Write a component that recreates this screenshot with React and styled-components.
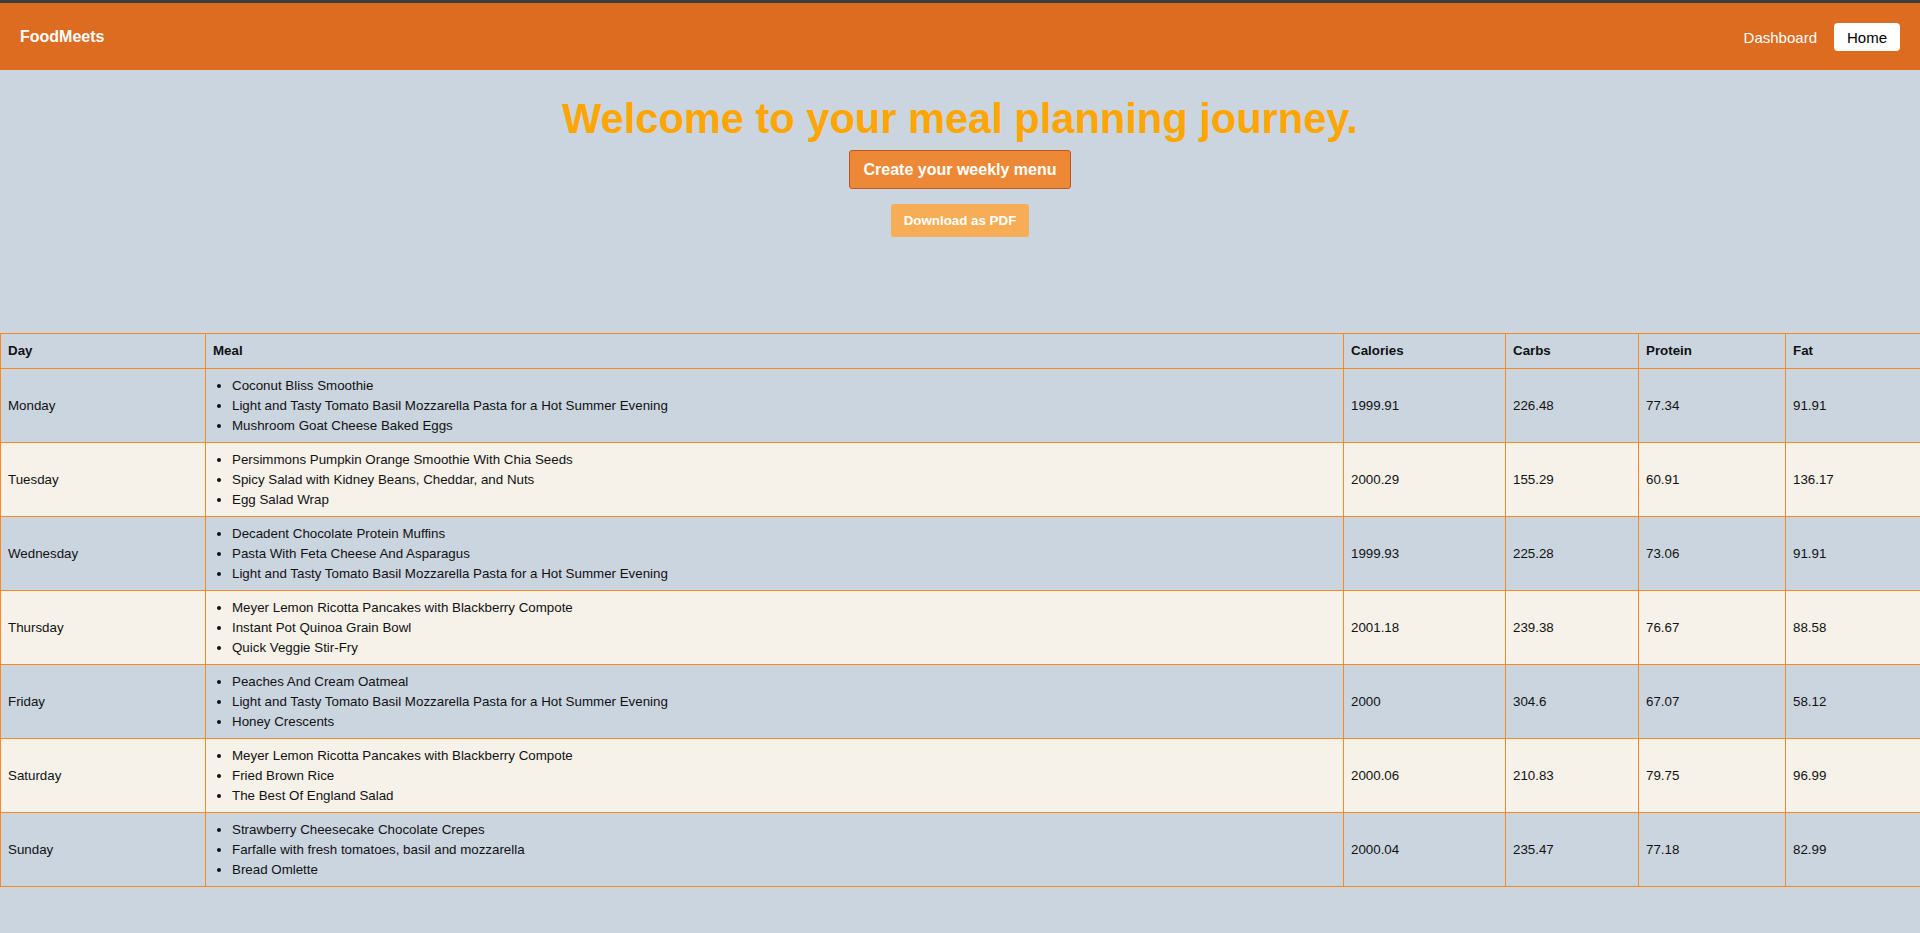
import React from "react";
import styled, { createGlobalStyle } from "styled-components";

const GlobalStyle = createGlobalStyle`
  html, body {
    margin: 0;
    padding: 0;
    background: #cbd5e0;
    font-family: "Liberation Sans", Arial, sans-serif;
  }
  * { box-sizing: border-box; }
`;

const Page = styled.div`
  min-height: 933px;
  background: #cbd5e0;
`;

const NavBar = styled.nav`
  display: flex;
  align-items: center;
  justify-content: space-between;
  height: 70px;
  padding: 1px 20px 0;
  background: #dd6b20;
  border-top: 3px solid #3d3d3d;
`;

const Brand = styled.div`
  color: #ffffff;
  font-weight: 700;
  font-size: 16px;
`;

const NavLinks = styled.div`
  display: flex;
  align-items: center;
  gap: 17px;
`;

const NavLink = styled.a`
  color: #ffffff;
  font-size: 15px;
  text-decoration: none;
  cursor: pointer;
`;

const NavButton = styled.button`
  height: 28px;
  padding: 0 13px;
  background: #ffffff;
  color: #000000;
  font-family: inherit;
  font-size: 15px;
  border: none;
  border-radius: 4px;
`;

const Hero = styled.section`
  display: flex;
  flex-direction: column;
  align-items: center;
  padding-top: 25px;
`;

const Title = styled.h1`
  margin: 0 0 7px;
  color: #ffa500;
  font-size: 41.6px;
  font-weight: 700;
  line-height: 48px;
`;

const PrimaryButton = styled.button`
  height: 39px;
  padding: 0 14px;
  background: #ed8936;
  color: #ffffff;
  font-family: inherit;
  font-size: 16px;
  font-weight: 700;
  border: 1px solid #c05621;
  border-radius: 3px;
`;

const SecondaryButton = styled.button`
  margin-top: 15px;
  height: 33px;
  padding: 0 13px;
  background: #f6ad55;
  color: #ffffff;
  font-family: inherit;
  font-size: 13.33px;
  font-weight: 700;
  border: none;
  border-radius: 3px;
`;

const TableWrap = styled.div`
  margin-top: 96px;
`;

const Table = styled.table`
  width: 100%;
  border-collapse: collapse;
  table-layout: fixed;
  font-size: 13.33px;
  line-height: 20px;
  color: #111111;
`;

const Row = styled.tr`
  background: ${(p) => (p.$alt ? "#f6f1e9" : "#cbd5e0")};
`;

const HeadCell = styled.th`
  border: 1px solid #f7891f;
  padding: 7px 7px;
  text-align: left;
  font-weight: 700;
`;

const Cell = styled.td`
  border: 1px solid #f7891f;
  padding: 6.5px 7px;
  vertical-align: middle;
`;

const MealList = styled.ul`
  margin: 0;
  padding-left: 19px;
`;

const data = [
  { day: "Monday", meals: ["Coconut Bliss Smoothie", "Light and Tasty Tomato Basil Mozzarella Pasta for a Hot Summer Evening", "Mushroom Goat Cheese Baked Eggs"], cal: "1999.91", carbs: "226.48", protein: "77.34", fat: "91.91" },
  { day: "Tuesday", meals: ["Persimmons Pumpkin Orange Smoothie With Chia Seeds", "Spicy Salad with Kidney Beans, Cheddar, and Nuts", "Egg Salad Wrap"], cal: "2000.29", carbs: "155.29", protein: "60.91", fat: "136.17" },
  { day: "Wednesday", meals: ["Decadent Chocolate Protein Muffins", "Pasta With Feta Cheese And Asparagus", "Light and Tasty Tomato Basil Mozzarella Pasta for a Hot Summer Evening"], cal: "1999.93", carbs: "225.28", protein: "73.06", fat: "91.91" },
  { day: "Thursday", meals: ["Meyer Lemon Ricotta Pancakes with Blackberry Compote", "Instant Pot Quinoa Grain Bowl", "Quick Veggie Stir-Fry"], cal: "2001.18", carbs: "239.38", protein: "76.67", fat: "88.58" },
  { day: "Friday", meals: ["Peaches And Cream Oatmeal", "Light and Tasty Tomato Basil Mozzarella Pasta for a Hot Summer Evening", "Honey Crescents"], cal: "2000", carbs: "304.6", protein: "67.07", fat: "58.12" },
  { day: "Saturday", meals: ["Meyer Lemon Ricotta Pancakes with Blackberry Compote", "Fried Brown Rice", "The Best Of England Salad"], cal: "2000.06", carbs: "210.83", protein: "79.75", fat: "96.99" },
  { day: "Sunday", meals: ["Strawberry Cheesecake Chocolate Crepes", "Farfalle with fresh tomatoes, basil and mozzarella", "Bread Omlette"], cal: "2000.04", carbs: "235.47", protein: "77.18", fat: "82.99" },
];

const colWidths = [205, 1138, 162, 133, 147, 135];

export default function App() {
  return (
    <Page>
      <GlobalStyle />
      <NavBar>
        <Brand>FoodMeets</Brand>
        <NavLinks>
          <NavLink>Dashboard</NavLink>
          <NavButton>Home</NavButton>
        </NavLinks>
      </NavBar>
      <Hero>
        <Title>Welcome to your meal planning journey.</Title>
        <PrimaryButton>Create your weekly menu</PrimaryButton>
        <SecondaryButton>Download as PDF</SecondaryButton>
      </Hero>
      <TableWrap>
        <Table>
          <colgroup>
            {colWidths.map((w, i) => (
              <col key={i} style={{ width: w }} />
            ))}
          </colgroup>
          <thead>
            <Row>
              <HeadCell>Day</HeadCell>
              <HeadCell>Meal</HeadCell>
              <HeadCell>Calories</HeadCell>
              <HeadCell>Carbs</HeadCell>
              <HeadCell>Protein</HeadCell>
              <HeadCell>Fat</HeadCell>
            </Row>
          </thead>
          <tbody>
            {data.map((d, i) => (
              <Row key={d.day} $alt={i % 2 === 1}>
                <Cell>{d.day}</Cell>
                <Cell>
                  <MealList>
                    {d.meals.map((m, j) => (
                      <li key={j}>{m}</li>
                    ))}
                  </MealList>
                </Cell>
                <Cell>{d.cal}</Cell>
                <Cell>{d.carbs}</Cell>
                <Cell>{d.protein}</Cell>
                <Cell>{d.fat}</Cell>
              </Row>
            ))}
          </tbody>
        </Table>
      </TableWrap>
    </Page>
  );
}
